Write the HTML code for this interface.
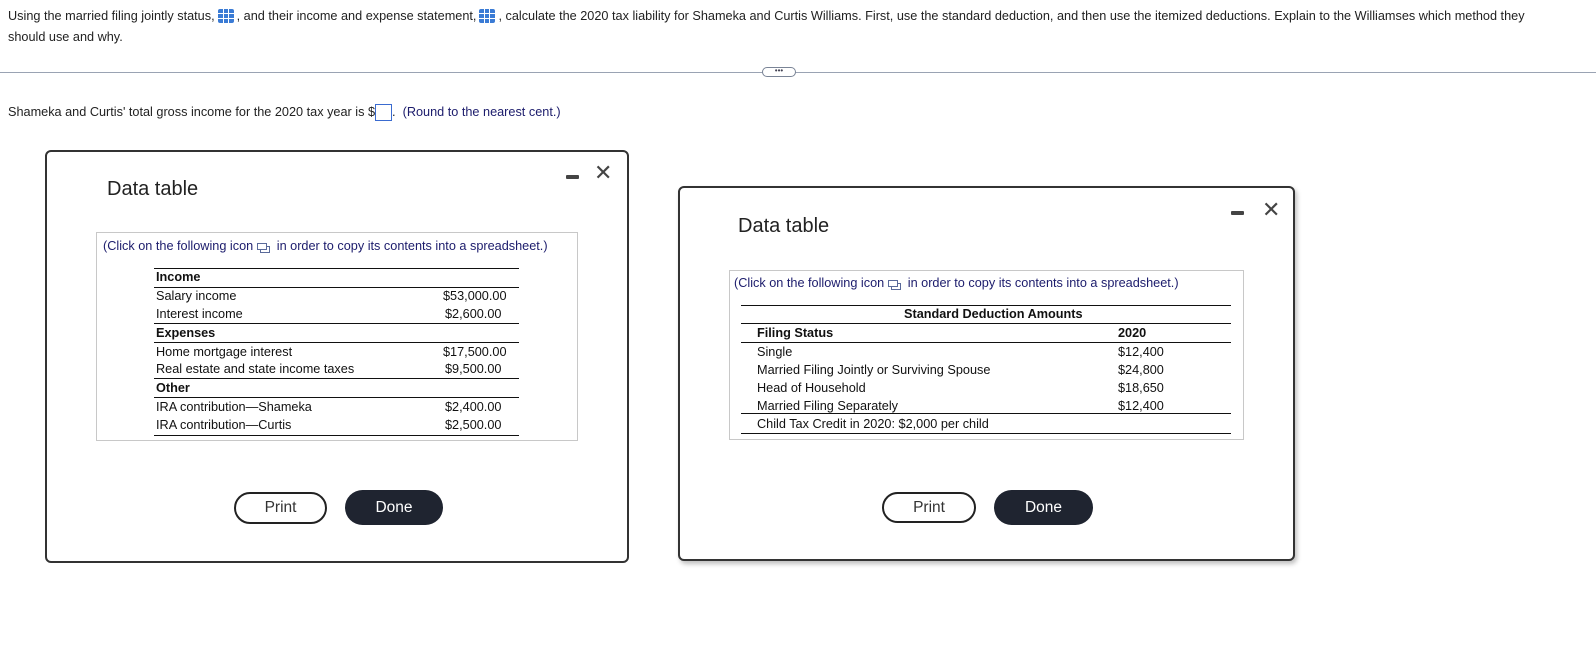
<!DOCTYPE html>
<html><head><meta charset="utf-8"><style>
*{margin:0;padding:0;box-sizing:border-box}
body{width:1596px;height:655px;background:#fff;font-family:"Liberation Sans",Arial,sans-serif;color:#222;position:relative;overflow:hidden;font-size:12.7px}
.a{position:absolute;white-space:nowrap}
.ic{display:inline-block;width:16px;height:14px;background:#3a7bd5;border-radius:2px;vertical-align:-3px;margin:0 3px;position:relative;background-image:linear-gradient(#fff,#fff),linear-gradient(#fff,#fff),linear-gradient(#fff,#fff),linear-gradient(#fff,#fff);background-size:16px 1px,16px 1px,1px 14px,1px 14px;background-position:0 4px,0 9px,5px 0,10px 0;background-repeat:no-repeat}
.dlg{position:absolute;border:2px solid #333;border-radius:6px;background:#fff}
.title{font-size:20px;color:#222}
.inner{position:absolute;border:1px solid #c8c8c8}
.copy{color:#1c1c6c;font-size:12.7px}
.cpi{display:inline-block;width:10px;height:7px;border:1px solid #5a6a9a;vertical-align:0;margin:0 6px 0 4px;box-shadow:3px 3px 0 -1px #fff,3px 3px 0 0 #5a6a9a}
.ln{position:absolute;height:1px;background:#111}
.t{position:absolute;font-size:12.7px;color:#111;white-space:nowrap}
.b{font-weight:bold}
.btn{position:absolute;border-radius:18px;font-size:15.5px;text-align:center}
.pr{border:2px solid #222;color:#333;background:#fff}
.dn{background:#1f2430;color:#fff}
.min{position:absolute;width:13px;height:4px;background:#444;border-radius:1px}
.x{position:absolute;font-size:22px;color:#444;line-height:1}
</style></head><body>
<div class="a" style="left:8px;top:9px">Using the married filing jointly status,<span class="ic"></span>, and their income and expense statement,<span class="ic"></span>, calculate the 2020 tax liability for Shameka and Curtis Williams. First, use the standard deduction, and then use the itemized deductions. Explain to the Williamses which method they</div>
<div class="a" style="left:8px;top:30px">should use and why.</div>
<div style="position:absolute;left:0;top:72px;width:1596px;height:1px;background:#9aa3b3"></div>
<div style="position:absolute;left:762px;top:67px;width:34px;height:10px;border:1px solid #7a8496;border-radius:5px;background:#fff;font-size:8px;line-height:6px;text-align:center;color:#445">•••</div>
<div class="a" style="left:8px;top:104px">Shameka and Curtis' total gross income for the 2020 tax year is $<span style="display:inline-block;width:17px;height:17px;border:1px solid #3a6bd0;vertical-align:-5px"></span>.&nbsp; <span style="color:#1c1c6c">(Round to the nearest cent.)</span></div>

<div class="dlg" style="left:45px;top:150px;width:584px;height:413px"></div>
<div class="a title" style="left:107px;top:178px">Data table</div>
<div class="min" style="left:566px;top:175px"></div>
<div class="x" style="left:594px;top:162px">✕</div>
<div class="inner" style="left:96px;top:232px;width:482px;height:209px"></div>
<div class="a copy" style="left:103px;top:239px">(Click on the following icon<span class="cpi"></span> in order to copy its contents into a spreadsheet.)</div>
<div class="ln" style="left:154px;top:268px;width:365px"></div>
<div class="ln" style="left:154px;top:287px;width:365px"></div>
<div class="ln" style="left:154px;top:323px;width:365px"></div>
<div class="ln" style="left:154px;top:342px;width:365px"></div>
<div class="ln" style="left:154px;top:378px;width:365px"></div>
<div class="ln" style="left:154px;top:397px;width:365px"></div>
<div class="ln" style="left:154px;top:435px;width:365px"></div>
<div class="t b" style="left:156px;top:270px">Income</div>
<div class="t" style="left:156px;top:289px">Salary income</div><div class="t" style="left:443px;top:289px">$53,000.00</div>
<div class="t" style="left:156px;top:307px">Interest income</div><div class="t" style="left:445px;top:307px">$2,600.00</div>
<div class="t b" style="left:156px;top:326px">Expenses</div>
<div class="t" style="left:156px;top:345px">Home mortgage interest</div><div class="t" style="left:443px;top:345px">$17,500.00</div>
<div class="t" style="left:156px;top:362px">Real estate and state income taxes</div><div class="t" style="left:445px;top:362px">$9,500.00</div>
<div class="t b" style="left:156px;top:381px">Other</div>
<div class="t" style="left:156px;top:400px">IRA contribution—Shameka</div><div class="t" style="left:445px;top:400px">$2,400.00</div>
<div class="t" style="left:156px;top:418px">IRA contribution—Curtis</div><div class="t" style="left:445px;top:418px">$2,500.00</div>
<div class="btn pr" style="left:234px;top:492px;width:93px;height:32px;line-height:28px">Print</div>
<div class="btn dn" style="left:345px;top:490px;width:98px;height:35px;line-height:35px">Done</div>

<div class="dlg" style="left:678px;top:186px;width:617px;height:375px;box-shadow:2px 3px 5px rgba(0,0,0,.25)"></div>
<div class="a title" style="left:738px;top:215px">Data table</div>
<div class="min" style="left:1231px;top:211px"></div>
<div class="x" style="left:1262px;top:199px">✕</div>
<div class="inner" style="left:729px;top:270px;width:515px;height:170px"></div>
<div class="a copy" style="left:734px;top:276px">(Click on the following icon<span class="cpi"></span> in order to copy its contents into a spreadsheet.)</div>
<div class="ln" style="left:741px;top:305px;width:490px"></div>
<div class="ln" style="left:741px;top:323px;width:490px"></div>
<div class="ln" style="left:741px;top:342px;width:490px"></div>
<div class="ln" style="left:741px;top:413px;width:490px"></div>
<div class="ln" style="left:741px;top:433px;width:490px"></div>
<div class="t b" style="left:904px;top:307px">Standard Deduction Amounts</div>
<div class="t b" style="left:757px;top:326px">Filing Status</div><div class="t b" style="left:1118px;top:326px">2020</div>
<div class="t" style="left:757px;top:345px">Single</div><div class="t" style="left:1118px;top:345px">$12,400</div>
<div class="t" style="left:757px;top:363px">Married Filing Jointly or Surviving Spouse</div><div class="t" style="left:1118px;top:363px">$24,800</div>
<div class="t" style="left:757px;top:381px">Head of Household</div><div class="t" style="left:1118px;top:381px">$18,650</div>
<div class="t" style="left:757px;top:399px">Married Filing Separately</div><div class="t" style="left:1118px;top:399px">$12,400</div>
<div class="t" style="left:757px;top:417px">Child Tax Credit in 2020: $2,000 per child</div>
<div class="btn pr" style="left:882px;top:492px;width:94px;height:31px;line-height:27px">Print</div>
<div class="btn dn" style="left:994px;top:490px;width:99px;height:35px;line-height:35px">Done</div>
</body></html>
